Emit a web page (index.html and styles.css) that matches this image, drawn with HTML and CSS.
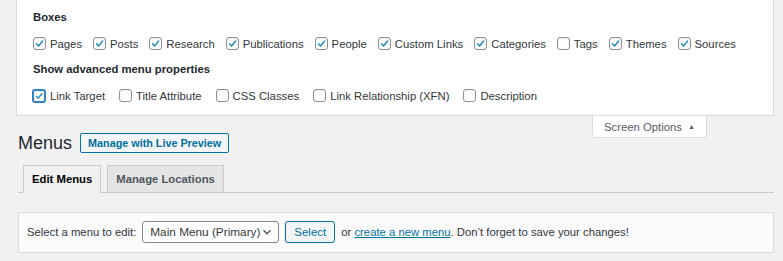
FILE: index.html
```html
<!DOCTYPE html>
<html lang="en">
<head>
    <meta charset="UTF-8">
    <title>Menus</title>
    <link rel="stylesheet" href="styles.css">
</head>
<body>
    <div class="screen-meta">
        <h5>Boxes</h5>
        <div class="opts boxes">
            <label class="opt"><span class="cb on"><svg viewBox="0 0 13 13"><path d="M3 6.8l2.4 2.6L10.2 3.6"/></svg></span>Pages</label>
            <label class="opt"><span class="cb on"><svg viewBox="0 0 13 13"><path d="M3 6.8l2.4 2.6L10.2 3.6"/></svg></span>Posts</label>
            <label class="opt"><span class="cb on"><svg viewBox="0 0 13 13"><path d="M3 6.8l2.4 2.6L10.2 3.6"/></svg></span>Research</label>
            <label class="opt"><span class="cb on"><svg viewBox="0 0 13 13"><path d="M3 6.8l2.4 2.6L10.2 3.6"/></svg></span>Publications</label>
            <label class="opt"><span class="cb on"><svg viewBox="0 0 13 13"><path d="M3 6.8l2.4 2.6L10.2 3.6"/></svg></span>People</label>
            <label class="opt"><span class="cb on"><svg viewBox="0 0 13 13"><path d="M3 6.8l2.4 2.6L10.2 3.6"/></svg></span>Custom Links</label>
            <label class="opt"><span class="cb on"><svg viewBox="0 0 13 13"><path d="M3 6.8l2.4 2.6L10.2 3.6"/></svg></span>Categories</label>
            <label class="opt"><span class="cb"></span>Tags</label>
            <label class="opt"><span class="cb on"><svg viewBox="0 0 13 13"><path d="M3 6.8l2.4 2.6L10.2 3.6"/></svg></span>Themes</label>
            <label class="opt"><span class="cb on"><svg viewBox="0 0 13 13"><path d="M3 6.8l2.4 2.6L10.2 3.6"/></svg></span>Sources</label>
        </div>
        <h5>Show advanced menu properties</h5>
        <div class="opts advanced">
            <label class="opt"><span class="cb on focus"><svg viewBox="0 0 13 13"><path d="M3 6.8l2.4 2.6L10.2 3.6"/></svg></span>Link Target</label>
            <label class="opt"><span class="cb"></span>Title Attribute</label>
            <label class="opt"><span class="cb"></span>CSS Classes</label>
            <label class="opt"><span class="cb"></span>Link Relationship (XFN)</label>
            <label class="opt"><span class="cb"></span>Description</label>
        </div>
    </div>
    <div class="meta-links">
        <a class="screen-tab">Screen Options <span class="arrow">&#9650;</span></a>
    </div>
    <div class="wrap">
        <h1>Menus <a class="page-title-action">Manage with Live Preview</a></h1>
        <div class="tabs">
            <a class="tab active">Edit Menus</a>
            <a class="tab">Manage Locations</a>
        </div>
        <div class="manage-menus">
            <span class="lbl">Select a menu to edit:</span>
            <span class="select">Main Menu (Primary)<svg viewBox="0 0 10 10"><path d="M1.5 3.2L5 6.7l3.5-3.5"/></svg></span>
            <a class="btn">Select</a>
            <span class="note">or <a class="link">create a new menu</a>. Don’t forget to save your changes!</span>
        </div>
    </div>
</body>
</html>
```
FILE: styles.css
```css
body {
    margin: 0;
    background: #f1f1f1;
    color: #32373c;
    font-family: 'Liberation Sans', Arial, sans-serif;
    font-size: 11.3px;
    white-space: nowrap;
}
.screen-meta {
    margin: 0 9px 0 16px;
    background: #fff;
    border: 1px solid #dcdcdc;
    border-top: none;
    padding: 11px 16px 10px 16px;
    height: 94px;
}
.screen-meta h5 {
    margin: 0;
    font-size: 11.3px;
    font-weight: bold;
    color: #23282d;
    line-height: 13px;
}
.opts {
    display: flex;
    align-items: center;
    margin: 12px 0 12px 0;
    height: 15px;
}
.opt {
    display: flex;
    align-items: center;
    flex-shrink: 0;
    margin-right: 11px;
    color: #32373c;
}
.advanced .opt {
    margin-right: 14px;
}
.cb {
    flex-shrink: 0;
    width: 11px;
    height: 11px;
    border: 1px solid #8c8f94;
    border-radius: 3px;
    margin-right: 4px;
    background: #fff;
    box-shadow: inset 0 1px 2px rgba(0,0,0,0.08);
    display: flex;
}
.cb svg {
    width: 11px;
    height: 11px;
    fill: none;
    stroke: #1e8cbe;
    stroke-width: 1.7;
    stroke-linecap: round;
    stroke-linejoin: round;
}
.cb.focus {
    border: 2px solid #3582c4;
    width: 10px;
    height: 10px;
    margin-left: -1px;
}
.cb.focus svg {
    width: 10px;
    height: 10px;
}
.meta-links {
    margin: 0 76px 0 16px;
    display: flex;
    justify-content: flex-end;
    height: 0;
}
.screen-tab {
    display: block;
    width: 113px;
    height: 21px;
    background: #fff;
    border: 1px solid #dcdcdc;
    border-top: none;
    border-radius: 0 0 3px 3px;
    text-align: center;
    line-height: 21px;
    color: #555d66;
    font-size: 11.3px;
}
.screen-tab .arrow {
    font-size: 7px;
    vertical-align: 2px;
    margin-left: 3px;
}
.wrap {
    margin: 0 9px 0 18px;
    padding-top: 16px;
}
h1 {
    margin: 0;
    font-size: 18px;
    font-weight: normal;
    color: #23282d;
    line-height: 22px;
    display: flex;
    align-items: center;
}
.page-title-action {
    margin-left: 8px;
    height: 18px;
    line-height: 18px;
    padding: 0 7px;
    border: 1px solid #0071a1;
    border-radius: 2px;
    color: #0071a1;
    background: #f3f5f6;
    font-size: 10.8px;
    font-weight: bold;
}
.tabs {
    display: flex;
    margin-top: 11px;
    padding-left: 5px;
    border-bottom: 1px solid #ccc;
}
.tab {
    height: 26px;
    line-height: 26px;
    padding: 0 8px;
    margin-right: 6px;
    margin-bottom: -1px;
    border: 1px solid #ccc;
    background: #e5e5e5;
    color: #50575e;
    font-size: 11.3px;
    font-weight: bold;
}
.tab.active {
    background: #f1f1f1;
    border-bottom-color: #f1f1f1;
    color: #000;
}
.manage-menus {
    margin-top: 19px;
    background: #fbfbfb;
    border: 1px solid #dcdcdc;
    padding: 8px 8px 9px 8px;
    display: flex;
    align-items: center;
    color: #32373c;
}
.lbl {
    margin-right: 6px;
}
.select {
    flex-shrink: 0;
    display: flex;
    align-items: center;
    justify-content: space-between;
    box-sizing: border-box;
    width: 137px;
    height: 22px;
    padding: 0 6px 0 7px;
    border: 1px solid #7e8993;
    border-radius: 3px;
    background: #fff;
    font-size: 11.8px;
    color: #32373c;
}
.select svg {
    width: 10px;
    height: 10px;
    fill: none;
    stroke: #555;
    stroke-width: 1.4;
}
.btn {
    margin-left: 6px;
    height: 20px;
    line-height: 20px;
    padding: 0 8px;
    border: 1px solid #0071a1;
    border-radius: 3px;
    background: #f3f5f6;
    color: #0071a1;
    font-size: 11.5px;
}
.note {
    margin-left: 6px;
}
.link {
    color: #0073aa;
    text-decoration: underline;
}
```
